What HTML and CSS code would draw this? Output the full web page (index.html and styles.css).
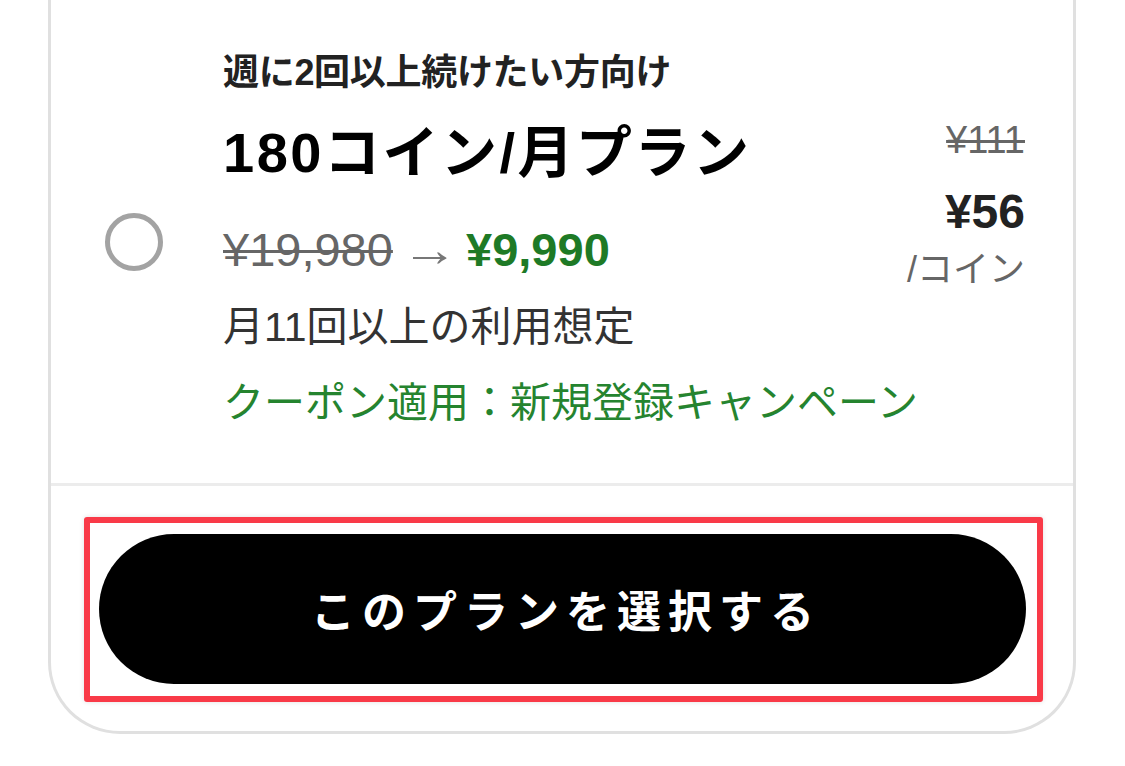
FILE: index.html
```html
<!DOCTYPE html>
<html lang="ja">
<head>
    <meta charset="UTF-8">
    <meta name="viewport" content="width=device-width, initial-scale=1.0">
    <title>180コイン/月プラン</title>
    <link rel="stylesheet" href="styles.css">
</head>
<body>

<div class="plan-card">
    <div class="plan-body">
        <div class="radio-col">
            <span class="radio"></span>
        </div>

        <div class="plan-info">
            <p class="plan-target">週に2回以上続けたい方向け</p>
            <h2 class="plan-name">180コイン/月プラン</h2>
            <p class="plan-price">
                <span class="price-old">¥19,980</span>
                <span class="arrow">→</span>
                <span class="price-new">¥9,990</span>
            </p>
            <p class="plan-usage">月11回以上の利用想定</p>
            <p class="plan-coupon">クーポン適用：新規登録キャンペーン</p>
        </div>

        <div class="unit-col">
            <p class="unit-old">¥111</p>
            <p class="unit-new">¥56</p>
            <p class="unit-label">/コイン</p>
        </div>
    </div>

    <div class="plan-footer">
        <div class="highlight">
            <button class="select-button">このプランを選択する</button>
        </div>
    </div>
</div>

</body>
</html>
```

FILE: styles.css
```css
body {
    margin: 0;
    background: #fff;
    font-family: "Liberation Sans", "Noto Sans CJK JP", sans-serif;
    color: #222;
}

p, h2 {
    margin: 0;
}

.plan-card {
    margin: 0 49px 0 48px;
    border: 3px solid #e0e0e0;
    border-top: none;
    border-radius: 0 0 72px 72px;
    height: 734px;
    box-sizing: border-box;
    background: #fff;
}

.plan-body {
    display: flex;
    align-items: center;
    height: 483px;
    border-bottom: 3px solid #ececec;
    padding: 0 48px 0 54px;
}

.radio-col {
    width: 118px;
    flex: none;
}

.radio {
    display: block;
    width: 48px;
    height: 48px;
    border: 5px solid #a3a3a3;
    border-radius: 50%;
}

.plan-info {
    flex: 1;
    min-width: 0;
    align-self: flex-start;
    padding-top: 49px;
}

.plan-target {
    font-size: 36px;
    line-height: 48px;
    font-weight: bold;
    color: #222;
    letter-spacing: -0.3px;
}

.plan-name {
    margin-top: 20px;
    font-size: 56px;
    line-height: 72px;
    font-weight: bold;
    color: #000;
    letter-spacing: 2.5px;
}

.plan-price {
    margin-top: 29px;
    font-size: 47px;
    line-height: 64px;
    color: #666;
}

.price-old {
    text-decoration: line-through;
    text-decoration-thickness: 3px;
}

.arrow {
    display: inline-block;
    transform: scaleX(1.2);
    color: #777;
}

.price-new {
    color: #1e7a26;
    font-weight: bold;
}

.plan-usage {
    margin-top: 17px;
    font-size: 41px;
    line-height: 56px;
    color: #333;
}

.plan-coupon {
    margin-top: 20px;
    font-size: 41px;
    line-height: 56px;
    color: #25842f;
    white-space: nowrap;
}

.unit-col {
    align-self: flex-start;
    padding-top: 116px;
    text-align: right;
}

.unit-old {
    font-size: 38px;
    line-height: 48px;
    color: #666;
    text-decoration: line-through;
    text-decoration-thickness: 3px;
}

.unit-new {
    margin-top: 20px;
    font-size: 48px;
    line-height: 56px;
    font-weight: bold;
    color: #222;
}

.unit-label {
    margin-top: 6px;
    font-size: 36px;
    line-height: 48px;
    color: #666;
}

.plan-footer {
    padding: 31px 30px 29px 33px;
}

.highlight {
    border: 6px solid #f93a48;
    border-radius: 3px;
    padding: 11px 11px 12px 9px;
    box-shadow: 0 0 5px rgba(0, 0, 0, 0.12);
}

.select-button {
    display: block;
    width: 100%;
    height: 150px;
    border: none;
    border-radius: 75px;
    background: #000;
    color: #fff;
    font-family: "Noto Sans CJK JP", sans-serif;
    font-size: 44px;
    font-weight: bold;
    letter-spacing: 7px;
    padding: 0 0 0 7px;
    cursor: pointer;
}
```
